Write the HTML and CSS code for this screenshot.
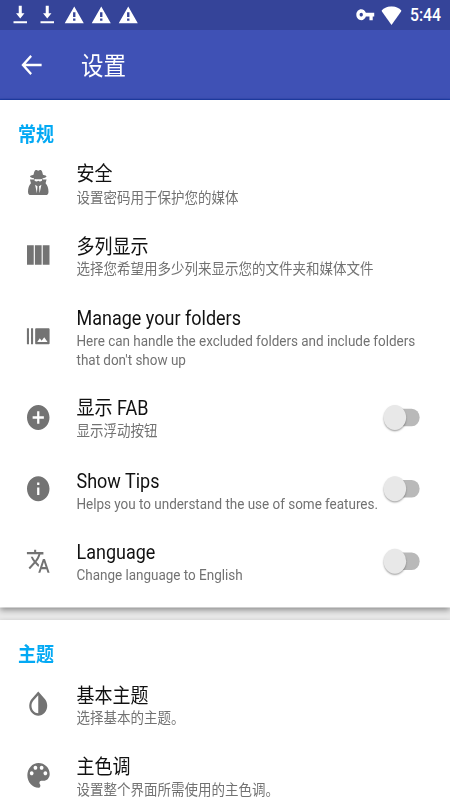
FILE: index.html
```html
<!DOCTYPE html>
<html lang="zh-CN">
<head>
<meta charset="utf-8">
<title>设置</title>
<link rel="stylesheet" href="styles.css">
</head>
<body>
<div class="screen">
  <header class="status">
    <div class="notices">
      <svg viewBox="0 0 24 24"><path d="M10.200 2.200h3.600v8h3.200L12 15.800 7 10.200h3.200zM4 18.700h16v2.200H4z"/></svg>
      <svg viewBox="0 0 24 24"><path d="M10.200 2.200h3.600v8h3.200L12 15.800 7 10.200h3.200zM4 18.700h16v2.200H4z"/></svg>
      <svg viewBox="0 0 24 24"><path d="M.7 20.700h22.600L12 2.800zm12.700-2.500h-2.800v-2.500h2.800zm0-4h-2.800V9h2.800z"/></svg>
      <svg viewBox="0 0 24 24"><path d="M.7 20.700h22.600L12 2.800zm12.700-2.500h-2.800v-2.500h2.800zm0-4h-2.800V9h2.800z"/></svg>
      <svg viewBox="0 0 24 24"><path d="M.7 20.700h22.600L12 2.800zm12.700-2.500h-2.800v-2.500h2.800zm0-4h-2.800V9h2.800z"/></svg>
    </div>
    <svg class="key" viewBox="0 0 24 24"><path d="M12.650 10C11.830 7.670 9.610 6 7 6c-3.310 0-6 2.690-6 6s2.690 6 6 6c2.610 0 4.830-1.670 5.650-4H17v4h4v-4h2v-4H12.650zM7 14c-1.100 0-2-.9-2-2s.9-2 2-2 2 .9 2 2-.9 2-2 2z"/></svg>
    <svg class="wifi" viewBox="0 0 18 15"><path d="M9 15 0 3.500C2.400 1.300 5.500 0 9 0s6.600 1.300 9 3.500z"/></svg>
    <span class="clock">5:44</span>
  </header>
  <div class="toolbar">
    <svg viewBox="0 0 24 24"><path d="M21 11H6.830l5.590-5.590L11 4l-8 8 8 8 1.410-1.410L6.830 13H21v-2z"/></svg>
    <h1>设置</h1>
  </div>
  <main>
    <section class="card">
      <h2>常规</h2>
      <div class="row">
        <svg class="icon" viewBox="0 0 24 24"><path d="M9.400 2.200c1-.5 1.600.3 2.600.3s1.600-.8 2.600-.3c.9.500 1.200 2.200 1.600 3.600 2 .4 3.100.9 3.100 1.400 0 .7-1.500 1.200-3.500 1.400v1h3.600l-.9 2.900c1.800 1.500 2.600 4.300 2.600 6.800 0 1.800-.8 2.700-2.500 2.700H5.400c-1.700 0-2.500-.9-2.500-2.700 0-2.500.8-5.300 2.600-6.800l-.9-2.900h3.600v-1c-2-.2-3.500-.7-3.500-1.400 0-.5 1.100-1 3.100-1.400.4-1.400.7-3.100 1.600-3.600z"/><path class="cut" d="M8.700 9.200c2.200.3 4.400.3 6.600 0v1.300c-1.400.9-2.300.7-3.300.1-1 .6-1.900.8-3.300-.1zM9.200 13.700l2.100 1.300-.5 5.600zM14.800 13.700l-2.100 1.300.5 5.600z"/></svg>
        <div class="text"><h3>安全</h3><p>设置密码用于保护您的媒体</p></div>
      </div>
      <div class="row">
        <svg class="icon" viewBox="0 0 24 24"><path d="M2 4.200h6v15.600H2zM9 4.200h6v15.600H9zM16 4.200h6v15.600h-6z"/></svg>
        <div class="text"><h3>多列显示</h3><p>选择您希望用多少列来显示您的文件夹和媒体文件</p></div>
      </div>
      <div class="row tall">
        <svg class="icon small" viewBox="0 0 24 24"><path d="M1 5h2v14H1V5zm4 0h2v14H5V5zm17 0H10c-.55 0-1 .45-1 1v12c0 .55.450 1 1 1h12c.55 0 1-.45 1-1V6c0-.55-.45-1-1-1zM11 17l2.500-3.150L15.290 16l2.500-3.220L21 17H11z"/></svg>
        <div class="text latin"><h3>Manage your folders</h3><p>Here can handle the excluded folders and include folders that don't show up</p></div>
      </div>
      <div class="row">
        <svg class="icon" viewBox="0 0 24 24"><path d="M12 2C6.480 2 2 6.480 2 12s4.480 10 10 10 10-4.480 10-10S17.520 2 12 2zm5 11h-4v4h-2v-4H7v-2h4V7h2v4h4v2z"/></svg>
        <div class="text"><h3>显示 FAB</h3><p>显示浮动按钮</p></div>
        <div class="switch"><span class="thumb"></span></div>
      </div>
      <div class="row">
        <svg class="icon" viewBox="0 0 24 24"><path d="M12 2C6.480 2 2 6.480 2 12s4.480 10 10 10 10-4.480 10-10S17.520 2 12 2zm1 15h-2v-6h2v6zm0-8h-2V7h2v2z"/></svg>
        <div class="text latin"><h3>Show Tips</h3><p>Helps you to understand the use of some features.</p></div>
        <div class="switch"><span class="thumb"></span></div>
      </div>
      <div class="row">
        <svg class="icon small" viewBox="0 0 24 24"><path d="M12.870 15.070l-2.540-2.510.03-.03c1.740-1.940 2.980-4.170 3.710-6.530H17V4h-7V2H8v2H1v1.990h11.170C11.500 7.920 10.440 9.750 9 11.350 8.070 10.320 7.300 9.190 6.690 8h-2c.73 1.630 1.730 3.170 2.980 4.560l-5.090 5.020L4 19l5-5 3.110 3.110.760-2.040zM18.500 10h-2L12 22h2l1.120-3h4.750L21 22h2l-4.500-12zm-2.620 7l1.620-4.330L19.120 17h-3.240z"/></svg>
        <div class="text latin"><h3>Language</h3><p>Change language to English</p></div>
        <div class="switch"><span class="thumb"></span></div>
      </div>
    </section>
    <section class="card">
      <h2>主题</h2>
      <div class="row">
        <svg class="icon" viewBox="0 0 24 24"><path d="M17.660 7.930L12 2.270 6.340 7.930c-3.120 3.120-3.120 8.190 0 11.310C7.900 20.800 9.950 21.580 12 21.580s4.100-.78 5.660-2.340c3.120-3.120 3.120-8.190 0-11.310zM12 19.590c-1.600 0-3.110-.62-4.240-1.760C6.620 16.690 6 15.190 6 13.590s.62-3.110 1.760-4.240L12 5.100v14.490z"/></svg>
        <div class="text"><h3>基本主题</h3><p>选择基本的主题。</p></div>
      </div>
      <div class="row">
        <svg class="icon palette" viewBox="0 0 24 24"><path d="M12 3c-4.970 0-9 4.030-9 9s4.030 9 9 9c.83 0 1.500-.67 1.500-1.500 0-.39-.15-.74-.39-1.010-.23-.26-.38-.61-.38-.99 0-.83.67-1.500 1.500-1.500H16c2.760 0 5-2.240 5-5 0-4.420-4.030-8-9-8zm-5.500 9c-.83 0-1.500-.67-1.500-1.500S5.670 9 6.500 9 8 9.670 8 10.500 7.330 12 6.500 12zm3-4C8.670 8 8 7.330 8 6.500S8.670 5 9.500 5s1.500.67 1.500 1.500S10.330 8 9.500 8zm5 0c-.83 0-1.500-.67-1.500-1.500S13.670 5 14.500 5s1.500.67 1.500 1.500S15.330 8 14.500 8zm3 4c-.83 0-1.500-.67-1.500-1.500S16.670 9 17.500 9s1.500.67 1.500 1.500-.67 1.500-1.500 1.500z"/></svg>
        <div class="text"><h3>主色调</h3><p>设置整个界面所需使用的主色调。</p></div>
      </div>
    </section>
  </main>
</div>
</body>
</html>
```

FILE: styles.css
```css
* { box-sizing: border-box; margin: 0; padding: 0; }

html, body { width: 450px; height: 800px; overflow: hidden; }

body { font-family: Roboto, "Noto Sans CJK SC", sans-serif; background: #e8e8e8; }

svg { display: block; flex: none; fill: currentColor; }

/* 400 x 640 dp display shown in the 450 x 800 window */
.screen {
  width: 400px;
  height: 640px;
  overflow: hidden;
  transform: scale(1.125, 1.25);
  transform-origin: 0 0;
  display: flex;
  flex-direction: column;
}

.status {
  flex: none;
  height: 24px;
  padding: 0 8px 0 9px;
  display: flex;
  align-items: center;
  background: #354499;
  color: #fff;
}
.notices { display: flex; gap: 6px; margin-right: auto; }
.notices svg { width: 18px; height: 18px; }
.key { width: 17.500px; height: 17.500px; margin-right: 6px; }
.wifi { width: 18px; height: 15px; margin-right: 7px; }
.clock { padding-top: 1px; font-size: 14px; font-weight: 500; line-height: 23px; }

.toolbar {
  flex: none;
  height: 56px;
  padding: 0 16px;
  display: flex;
  align-items: center;
  gap: 32px;
  background: #3f51b5;
  border-bottom: 1px solid #1f3da5;
  color: #fff;
}
.toolbar svg { width: 24px; height: 24px; }
.toolbar h1 { padding-top: 2px; font-size: 20px; font-weight: 400; line-height: 28px; }

main { display: flex; flex-direction: column; gap: 10px; }
.card {
  flex: none;
  padding-bottom: 8.800px;
  background: #fff;
  box-shadow: 0 2px 5px rgba(0, 0, 0, .4);
}
.card h2 {
  height: 37.600px;
  padding: 16px 16px 0;
  font-size: 16px;
  font-weight: 700;
  line-height: 23px;
  color: #03a9f4;
  transform: translateY(.8px);
}

.row {
  height: 57.600px;
  padding: 0 27px 0 22px;
  display: flex;
  align-items: center;
}
.row.tall { height: 72px; }
.icon { width: 24px; height: 24px; color: #737373; }
.icon.small { width: 22px; height: 22px; margin: 0 1px; }
.cut { fill: #fff; }
.icon.palette { width: 26.500px; height: 26.500px; margin: 0 -1.250px; }
.text { flex: 1; min-width: 0; margin-left: 22px; padding-top: 2.400px; }
.text h3 { margin-bottom: .4px; font-size: 16px; font-weight: 400; line-height: 20px; color: #111; }
.text p { font-size: 12px; line-height: 14.400px; color: #727272; }
.latin { padding-top: 2.600px; }
.latin h3 { margin-bottom: .9px; }
.latin p { letter-spacing: -.02px; }

.switch {
  flex: none;
  width: 30px;
  height: 14px;
  border-radius: 7px;
  background: #b9b9b9;
}
.thumb {
  display: block;
  width: 20px;
  height: 20px;
  margin: -3px 0 0 -2.500px;
  border-radius: 50%;
  background: #e8e8e8;
  box-shadow: 0 1px 1.500px rgba(0, 0, 0, .35);
}
```
